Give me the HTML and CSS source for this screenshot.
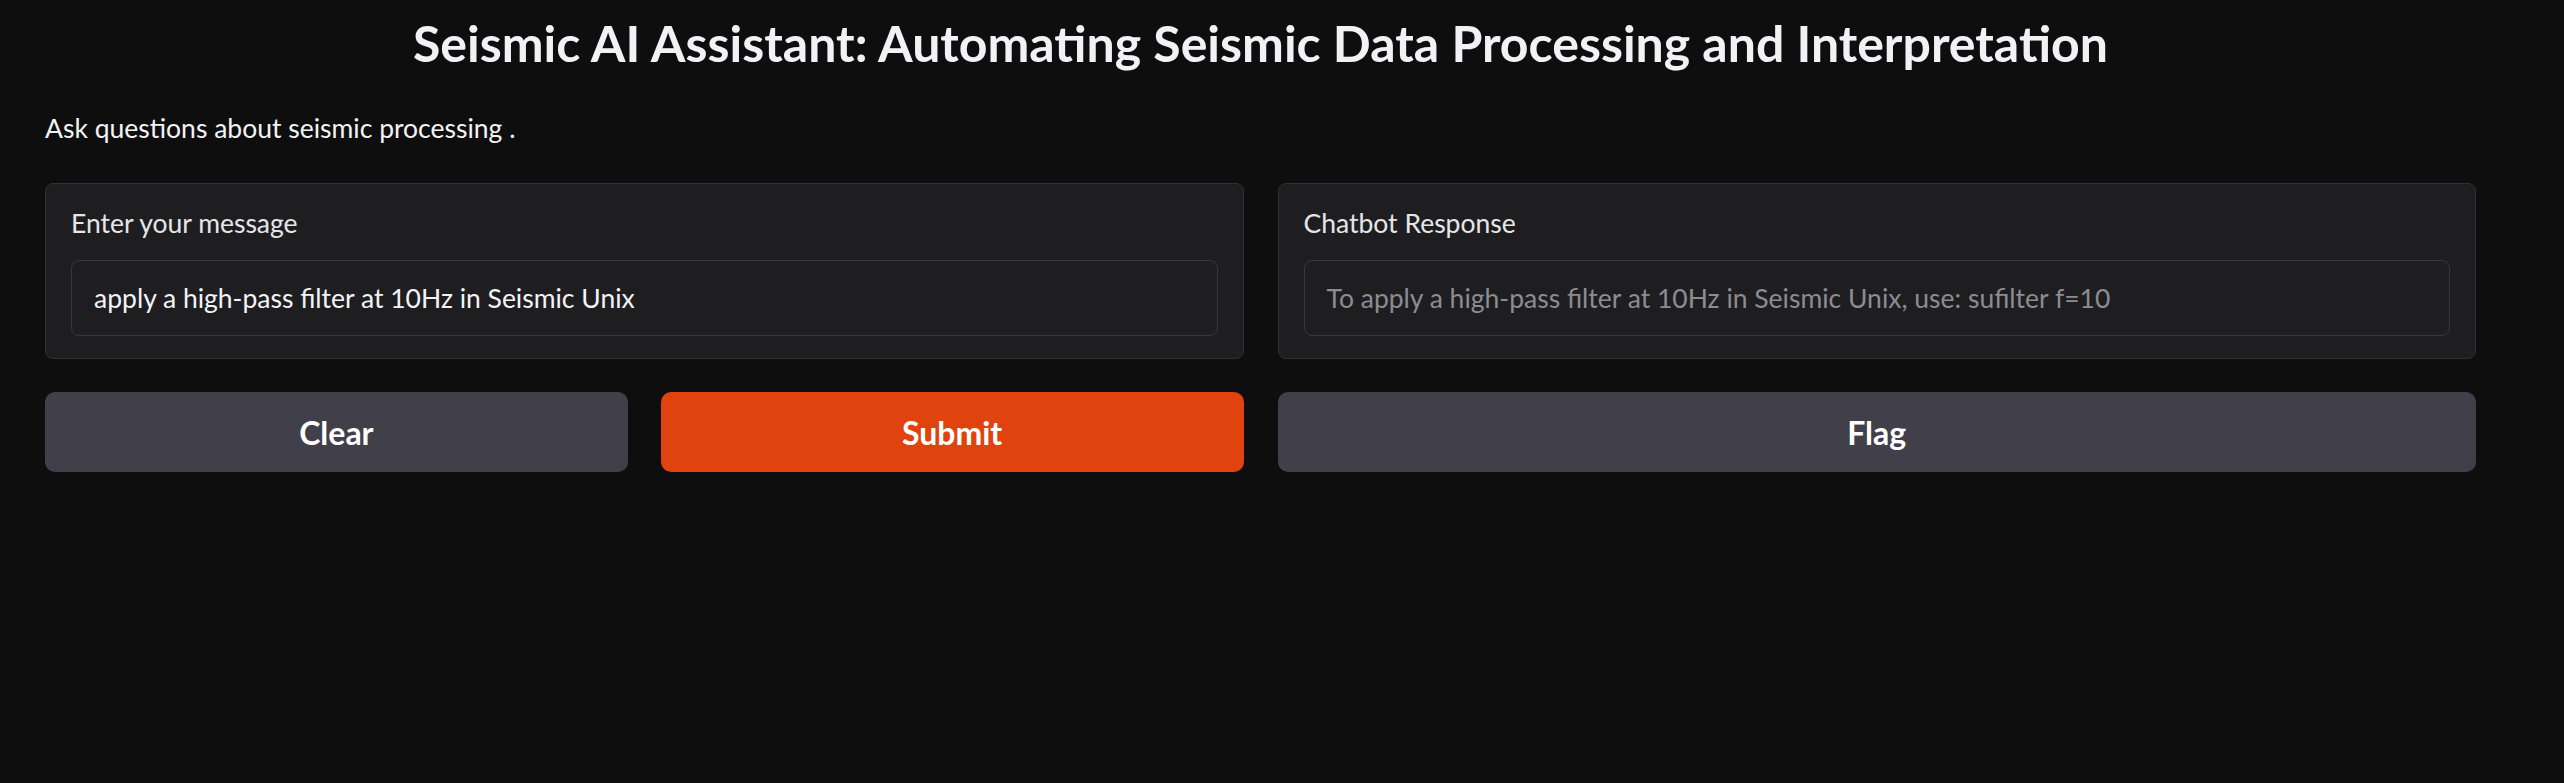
FILE: index.html
```html
<!DOCTYPE html>
<html lang="en">
<head>
<meta charset="utf-8">
<title>Seismic AI Assistant</title>
<link rel="stylesheet" href="styles.css">
</head>
<body>
<main class="app">
  <h1 class="title">Seismic AI Assistant: Automating Seismic Data Processing and Interpretation</h1>
  <p class="desc">Ask questions about seismic processing .</p>
  <div class="columns">
    <div class="col">
      <div class="panel">
        <label class="label">Enter your message</label>
        <div class="field">apply a high-pass filter at 10Hz in Seismic Unix</div>
      </div>
      <div class="btn-row">
        <button class="btn btn-secondary">Clear</button>
        <button class="btn btn-primary">Submit</button>
      </div>
    </div>
    <div class="col">
      <div class="panel">
        <label class="label">Chatbot Response</label>
        <div class="field field-output">To apply a high-pass filter at 10Hz in Seismic Unix, use: sufilter f=10</div>
      </div>
      <div class="btn-row">
        <button class="btn btn-secondary">Flag</button>
      </div>
    </div>
  </div>
</main>
</body>
</html>
```
FILE: styles.css
```css
html, body {
  margin: 0;
  padding: 0;
  background: #0e0e0f;
  height: 100%;
}
body {
  font-family: "Source Sans Pro", Lato, "Noto Sans", sans-serif;
  color: #f3f3f5;
}
.app {
  padding: 0 88px 0 45px;
}
.title {
  margin: 0;
  padding-top: 12px;
  text-align: center;
  font-size: 50px;
  line-height: 62px;
  font-weight: 700;
  color: #f2f2f4;
}
.desc {
  margin: 0;
  padding-top: 37px;
  font-size: 26.5px;
  line-height: 34px;
  color: #f3f3f5;
}
.columns {
  display: flex;
  gap: 34px;
  margin-top: 38px;
}
.col {
  flex: 1 1 0;
  display: flex;
  flex-direction: column;
  gap: 33px;
}
.panel {
  background: #1e1e21;
  border: 1px solid #303036;
  border-radius: 8px;
  padding: 22px 25px 22px;
  display: flex;
  flex-direction: column;
  gap: 20px;
}
.label {
  font-size: 26.5px;
  line-height: 34px;
  color: #e6e6e9;
}
.field {
  height: 74px;
  border: 1px solid #36363d;
  border-radius: 8px;
  background: #1e1e21;
  padding: 0 22px;
  display: flex;
  align-items: center;
  font-size: 26.5px;
  color: #f3f3f5;
}
.field-output {
  color: #8c8c91;
}
.btn-row {
  display: flex;
  gap: 33px;
}
.btn {
  flex: 1 1 0;
  height: 80px;
  border: none;
  border-radius: 10px;
  font-family: inherit;
  font-size: 32px;
  font-weight: 700;
  color: #ffffff;
}
.btn-secondary {
  background: #413f49;
}
.btn-primary {
  background: #e1430e;
}
```
